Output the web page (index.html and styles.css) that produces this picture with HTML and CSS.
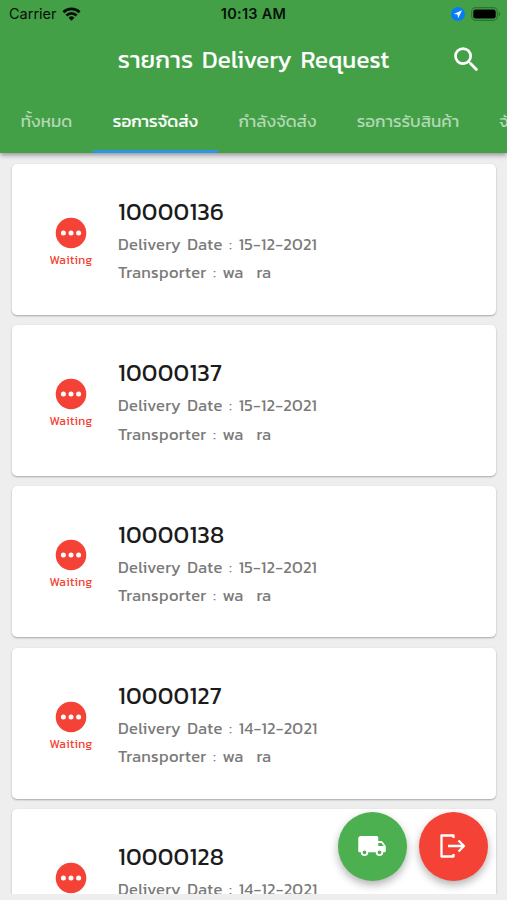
FILE: index.html
```html
<!DOCTYPE html>
<html lang="th">
<head>
<meta charset="utf-8">
<title>รายการ Delivery Request</title>
<link rel="stylesheet" href="styles.css">
</head>
<body>
<svg class="defs" aria-hidden="true">
  <symbol id="more" viewBox="0 0 32 32"><circle cx="16" cy="16" r="15.3" fill="#f44336"/><g fill="#fff"><circle cx="8.4" cy="16" r="2.5"/><circle cx="16" cy="16" r="2.5"/><circle cx="23.6" cy="16" r="2.5"/></g></symbol>
</svg>
<div class="app">
  <header class="header">
    <div class="status">
      <div class="carrier"><span>Carrier</span>
        <svg width="19" height="14" viewBox="0 0 18 14"><g fill="none" stroke="#071007" stroke-width="2.7"><path d="M.9 5.3a11.5 11.5 0 0 1 16.2 0"/><path d="M3.9 8.5a7.2 7.2 0 0 1 10.2 0"/></g><path d="M9 13.8 6.1 10.8a4.1 4.1 0 0 1 5.8 0z" fill="#071007"/></svg>
      </div>
      <div class="clock">10:13 AM</div>
      <div class="power">
        <svg width="14" height="14" viewBox="0 0 14 14"><circle cx="7" cy="7" r="7" fill="#087cf5"/><path d="M11 3.2 2.8 7l3.8.5.5 3.7z" fill="#fff"/></svg>
        <svg width="30" height="14" viewBox="0 0 30 14"><rect x=".7" y=".7" width="25.6" height="12.6" rx="4" fill="none" stroke="#2d7430" stroke-width="1.3"/><rect x="2.3" y="2.4" width="22.4" height="9.2" rx="2.3" fill="#000"/><path d="M27.7 4.7c2 .6 2 4 0 4.6z" fill="#2d7430"/></svg>
      </div>
    </div>
    <div class="bar">
      <h1>รายการ <span>Delivery Request</span></h1>
      <svg class="search" width="33" height="33" viewBox="0 0 24 24"><path fill="#fff" d="M15.5 14h-.79l-.28-.27A6.47 6.47 0 0 0 16 9.5 6.5 6.5 0 1 0 9.5 16c1.61 0 3.09-.59 4.23-1.57l.27.28v.79l5 4.99L20.49 19zm-6 0C7.01 14 5 11.99 5 9.5S7.01 5 9.5 5 14 7.01 14 9.5 11.99 14 9.5 14z"/></svg>
    </div>
    <nav class="tabs">
      <div class="tab t1">ทั้งหมด</div>
      <div class="tab t2 active">รอการจัดส่ง</div>
      <div class="tab t3">กำลังจัดส่ง</div>
      <div class="tab t4">รอการรับสินค้า</div>
      <div class="tab t5">จัดส่งแล้ว</div>
    </nav>
  </header>
  <main class="list">
    <article class="card"><div class="state"><svg width="32" height="32"><use href="#more"/></svg><span>Waiting</span></div><div class="info"><h2>10000136</h2><p class="date">Delivery Date : 15-12-2021</p><p class="carrier-name">Transporter : wa&nbsp; ra</p></div></article>
    <article class="card"><div class="state"><svg width="32" height="32"><use href="#more"/></svg><span>Waiting</span></div><div class="info"><h2>10000137</h2><p class="date">Delivery Date : 15-12-2021</p><p class="carrier-name">Transporter : wa&nbsp; ra</p></div></article>
    <article class="card"><div class="state"><svg width="32" height="32"><use href="#more"/></svg><span>Waiting</span></div><div class="info"><h2>10000138</h2><p class="date">Delivery Date : 15-12-2021</p><p class="carrier-name">Transporter : wa&nbsp; ra</p></div></article>
    <article class="card"><div class="state"><svg width="32" height="32"><use href="#more"/></svg><span>Waiting</span></div><div class="info"><h2>10000127</h2><p class="date">Delivery Date : 14-12-2021</p><p class="carrier-name">Transporter : wa&nbsp; ra</p></div></article>
    <article class="card"><div class="state"><svg width="32" height="32"><use href="#more"/></svg><span>Waiting</span></div><div class="info"><h2>10000128</h2><p class="date">Delivery Date : 14-12-2021</p><p class="carrier-name">Transporter : wa&nbsp; ra</p></div></article>
  </main>
  <div class="actions">
    <div class="fab truck"><svg width="30" height="30" viewBox="0 0 24 24"><path fill="#fff" d="M20 8h-3V5.2Q17 4 15.8 4H3c-1.1 0-2 .9-2 2v10q0 1 1 1h1a3 3 0 0 0 6 0h6a3 3 0 0 0 6 0h1q1 0 1-1v-4l-3-4zM6 18.5a1.5 1.5 0 1 1 0-3 1.5 1.5 0 0 1 0 3zm13.5-9 1.96 2.5H17V9.5h2.5zm-1.5 9a1.5 1.5 0 1 1 0-3 1.5 1.5 0 0 1 0 3z"/></svg></div>
    <div class="fab exit"><svg width="26" height="24" viewBox="0 0 26 24"><path d="M13.5 4V1.5H1.5v21h12V20M8 12h16M18.5 6.5 24 12l-5.5 5.5" fill="none" stroke="#fff" stroke-width="2.3" stroke-linejoin="round"/></svg></div>
  </div>
</div>
</body>
</html>
```
FILE: styles.css
```css
* { box-sizing: border-box; }
body { margin: 0; background: #eee; font-family: Kanit, Prompt, "Noto Sans Thai", "Noto Sans", sans-serif; }
h1, h2, p { margin: 0; font-weight: 400; white-space: nowrap; }
svg { display: block; flex: none; }
.defs { position: absolute; width: 0; height: 0; }
.app { position: relative; display: flex; flex-direction: column; width: 507px; height: 900px; overflow: hidden; padding-bottom: 6px; }
.header { position: relative; z-index: 1; flex: none; height: 152.5px; background: #43a047; box-shadow: 0 2px 5px rgba(0,0,0,.4); }
.status { display: grid; grid-template-columns: 1fr auto 1fr; align-items: center; height: 27px; padding: 0 7px 0 9px; font-family: Inter, sans-serif; font-size: 14.5px; color: #071007; }
.carrier { display: flex; align-items: center; gap: 5px; }
.clock { font-weight: 600; letter-spacing: .25px; margin-left: -2px; }
.power { display: flex; justify-content: flex-end; gap: 6px; margin-right: -1px; }
.bar { display: grid; grid-template-columns: 66px 1fr 66px; align-items: center; height: 66px; padding: 0 8px; color: #fff; }
h1 { grid-column: 2; justify-self: center; font-size: 24px; font-weight: 400; line-height: 34px; letter-spacing: .2px; word-spacing: 3px; -webkit-text-stroke: .15px #fff; }
.search { justify-self: center; margin-top: -2px; }
.tabs { display: flex; height: 59.5px; overflow: hidden; color: #b4d9b5; font-size: 17px; }
.tab { flex: none; display: flex; align-items: center; justify-content: center; white-space: nowrap; padding-bottom: 3px; }
.t1 { width: 93px; }
.t2 { width: 125px; }
.t3 { width: 119px; }
.t4 { width: 142px; }
.t5 { padding-left: 20px; }
.active { color: #fff; border-bottom: 3px solid #2d95e4; padding-bottom: 0; -webkit-text-stroke: .2px #fff; }
.list { flex: 1; min-height: 0; overflow: hidden; padding: 11.5px 11px 0 12px; }
.card { display: flex; height: 151px; margin-bottom: 10.2px; background: #fff; border-radius: 5px; box-shadow: 0 1px 2px rgba(0,0,0,.3); }
.state { display: flex; flex-direction: column; align-items: center; width: 84px; margin-left: 17px; padding-top: 53px; color: #f44336; font-size: 12px; line-height: 22.6px; letter-spacing: .3px; }
.info { margin-left: 5px; padding-top: 30.2px; color: #7a7a7a; }
h2 { margin-bottom: 1px; font-size: 24px; line-height: 36px; color: #1b1b1b; letter-spacing: .25px; }
.date, .carrier-name { font-size: 16.5px; line-height: 28.3px; letter-spacing: .28px; word-spacing: 2.3px; }
.actions { position: absolute; z-index: 2; right: 19.5px; bottom: 19.5px; display: flex; gap: 12px; }
.fab { display: flex; align-items: center; justify-content: center; width: 69px; height: 69px; border-radius: 50%; box-shadow: 0 4px 9px rgba(0,0,0,.3); }
.truck { background: #4caf50; }
.exit { background: #f44336; }
```
